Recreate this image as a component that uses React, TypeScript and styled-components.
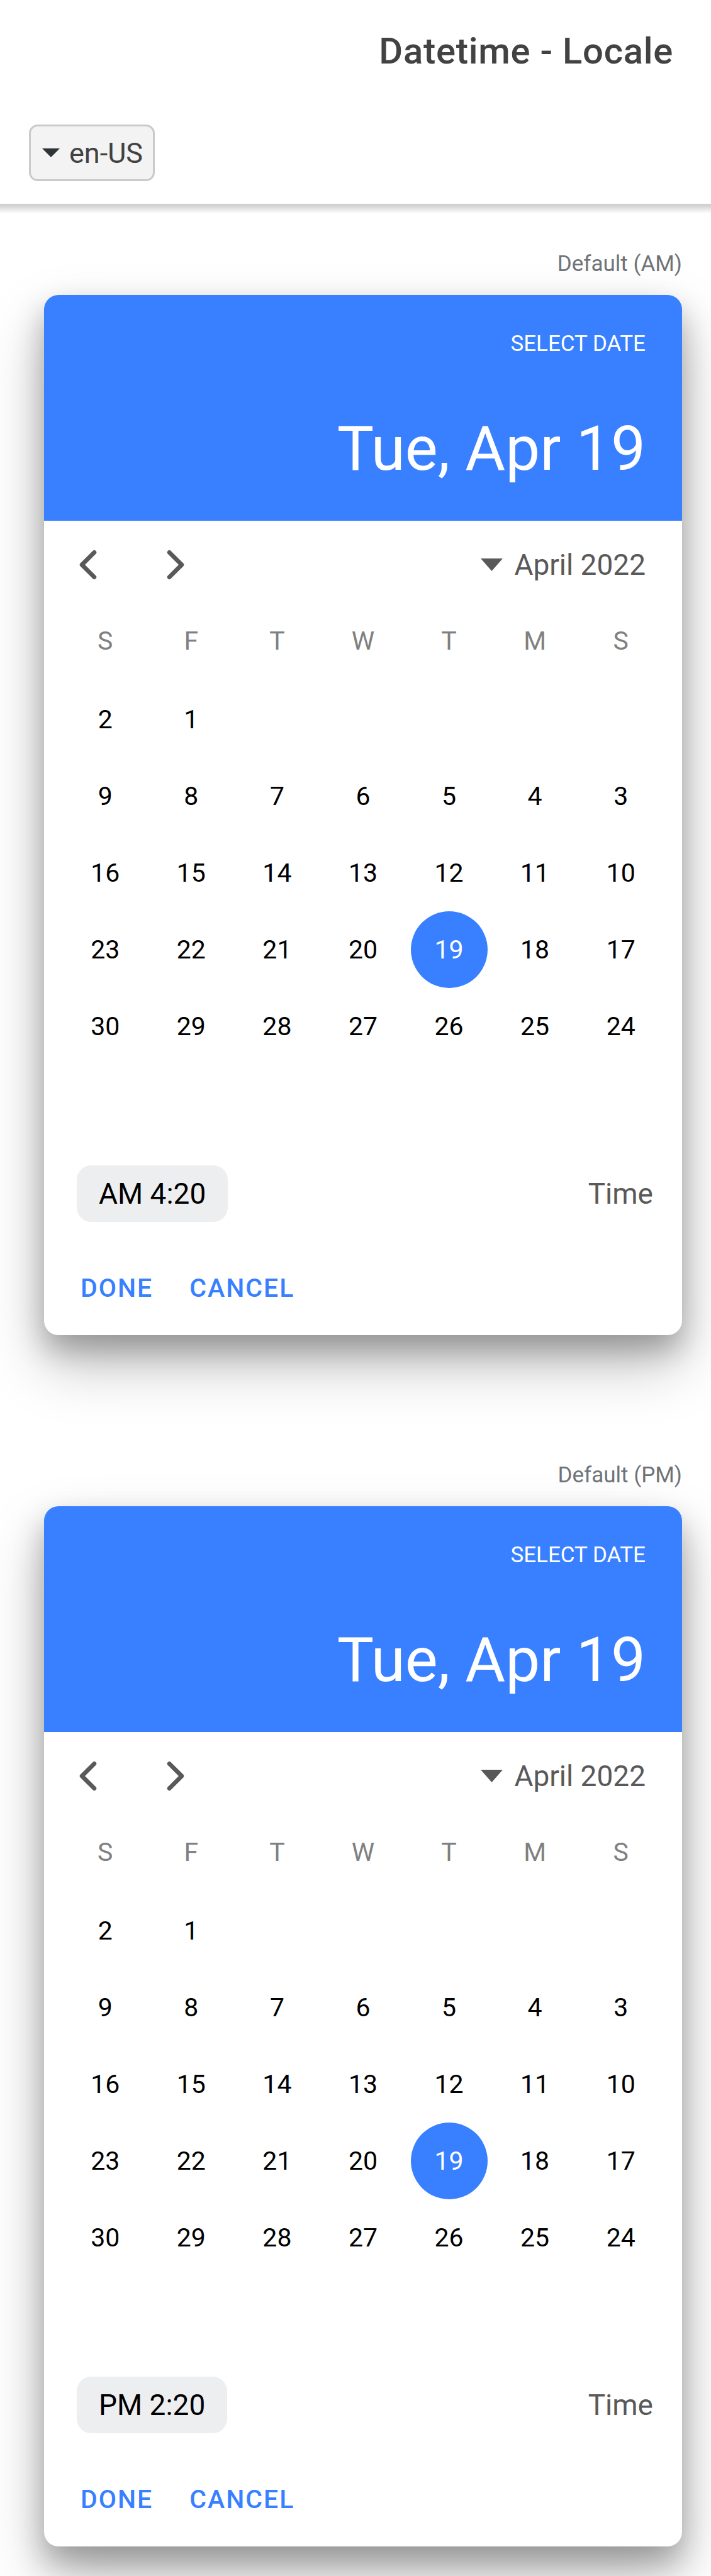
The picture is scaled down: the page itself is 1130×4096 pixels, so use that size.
import React from "react";
import styled, { createGlobalStyle } from "styled-components";

const GlobalStyle = createGlobalStyle`
  *, *::before, *::after { box-sizing: border-box; }
  body {
    margin: 0;
    background: #fff;
    font-family: Roboto, "Liberation Sans", sans-serif;
  }
  button { font-family: inherit; border: 0; margin: 0; padding: 0; background: transparent; cursor: pointer; }
`;

const Header = styled.header`
  position: relative;
  &::after {
    content: "";
    position: absolute;
    top: 100%;
    left: 0;
    right: 0;
    height: 15px;
    background: linear-gradient(#cfcfcf, #d2d2d2 20%, #e6e6e6 55%, #f6f6f6 85%, #fafafa);
  }
`;

const Toolbar = styled.div`
  height: 162px;
  display: flex;
  align-items: center;
  padding: 0 60px 0 46px;
`;

const Title = styled.h1`
  margin: 0 0 0 auto;
  font-size: 58px;
  line-height: 70px;
  font-weight: 500;
  letter-spacing: 0.0125em;
  color: #424242;
`;

const LocaleField = styled.label`
  display: grid;
  align-items: center;
  & > * { grid-area: 1 / 1; }
`;

const LocaleSelect = styled.select`
  appearance: none;
  height: 90px;
  border: 3px solid #cacaca;
  border-radius: 14px;
  padding: 0 15px 0 61px;
  margin: 0;
  background: #f3f3f3;
  color: #424242;
  font: 400 45px Roboto, sans-serif;
`;

const SelectArrow = styled.svg`
  width: 28px;
  height: 14px;
  margin-left: 21px;
  pointer-events: none;
`;

const Content = styled.main`
  padding: 69px 46px 47px 70px;
`;

const Example = styled.section`
  margin-bottom: 196px;
  &:last-child { margin-bottom: 0; }
`;

const ExampleTitle = styled.h2`
  margin: 0 0 23px;
  text-align: right;
  font-size: 35px;
  line-height: 53px;
  font-weight: 400;
  color: #6f7378;
`;

const Card = styled.div`
  border-radius: 23px;
  background: #fff;
  overflow: hidden;
  box-shadow: 0 46px 93px rgba(0, 0, 0, 0.25), 0 23px 46px rgba(0, 0, 0, 0.25);
`;

const CardHeader = styled.div`
  height: 359px;
  padding: 58px 58px 0;
  background: #3880ff;
  color: #fff;
  text-align: right;
`;

const Caption = styled.div`
  font-size: 35px;
  line-height: 40px;
  text-transform: uppercase;
`;

const SelectedDate = styled.div`
  margin-top: 89px;
  font-size: 98px;
  line-height: 116px;
`;

const MonthBar = styled.div`
  display: flex;
  justify-content: space-between;
  align-items: center;
  height: 139px;
  padding: 0 58px 0 0;
  color: #595959;
`;

const Arrows = styled.div`
  display: flex;
`;

const ArrowButton = styled.button`
  width: 139px;
  height: 139px;
  display: flex;
  align-items: center;
  justify-content: center;
  color: inherit;
  svg { width: 70px; height: 70px; }
`;

const MonthButton = styled.button`
  display: flex;
  align-items: center;
  gap: 18px;
  font-size: 46px;
  line-height: 54px;
  color: inherit;
  svg { width: 35px; height: 20px; }
`;

const Calendar = styled.table`
  width: calc(100% - 58px);
  margin: 0 29px;
  table-layout: fixed;
  border-collapse: collapse;
`;

const Weekday = styled.th`
  height: 116px;
  padding: 0 0 12px;
  font-size: 41px;
  font-weight: 400;
  color: #808080;
`;

const DayCell = styled.td`
  height: 122px;
  padding: 0;
  text-align: center;
`;

const Day = styled.button<{ $selected: boolean }>`
  width: 122px;
  height: 122px;
  border-radius: 50%;
  font-size: 41px;
  background: ${(p) => (p.$selected ? "#3880ff" : "transparent")};
  color: ${(p) => (p.$selected ? "#fff" : "#000")};
`;

const TimeRow = styled.div`
  display: flex;
  justify-content: space-between;
  align-items: center;
  padding: 160px 46px 0 52px;
  font-size: 46px;
  color: #595959;
`;

const TimeButton = styled.button`
  height: 90px;
  padding: 0 35px;
  border-radius: 23px;
  background: #edeef0;
  font-size: 46px;
  color: #000;
`;

const Actions = styled.div`
  display: flex;
  gap: 58px;
  padding: 58px 58px 29px;
`;

const ActionButton = styled.button`
  height: 93px;
  font-size: 41px;
  font-weight: 500;
  letter-spacing: 2px;
  text-transform: uppercase;
  color: #3880ff;
`;

const WEEKDAYS = ["S", "F", "T", "W", "T", "M", "S"];

const WEEKS: (number | null)[][] = [
  [2, 1, null, null, null, null, null],
  [9, 8, 7, 6, 5, 4, 3],
  [16, 15, 14, 13, 12, 11, 10],
  [23, 22, 21, 20, 19, 18, 17],
  [30, 29, 28, 27, 26, 25, 24],
];

function Chevron({ points }: { points: string }) {
  return (
    <svg viewBox="0 0 512 512" aria-hidden="true">
      <polyline points={points} fill="none" stroke="currentColor" strokeWidth="50" strokeLinecap="round" strokeLinejoin="round" />
    </svg>
  );
}

function Datetime({ title, time }: { title: string; time: string }) {
  return (
    <Example>
      <ExampleTitle>{title}</ExampleTitle>
      <Card>
        <CardHeader>
          <Caption>Select Date</Caption>
          <SelectedDate>Tue, Apr 19</SelectedDate>
        </CardHeader>
        <MonthBar>
          <Arrows>
            <ArrowButton type="button" aria-label="Next month">
              <Chevron points="328 112 184 256 328 400" />
            </ArrowButton>
            <ArrowButton type="button" aria-label="Previous month">
              <Chevron points="184 112 328 256 184 400" />
            </ArrowButton>
          </Arrows>
          <MonthButton type="button">
            <svg viewBox="0 0 35 20" aria-hidden="true">
              <path d="M0 0H35L17.5 20Z" fill="currentColor" />
            </svg>
            April 2022
          </MonthButton>
        </MonthBar>
        <Calendar>
          <thead>
            <tr>
              {WEEKDAYS.map((name, i) => (
                <Weekday key={i} scope="col">{name}</Weekday>
              ))}
            </tr>
          </thead>
          <tbody>
            {WEEKS.map((week, i) => (
              <tr key={i}>
                {week.map((day, j) => (
                  <DayCell key={j}>
                    {day !== null && <Day type="button" $selected={day === 19}>{day}</Day>}
                  </DayCell>
                ))}
              </tr>
            ))}
          </tbody>
        </Calendar>
        <TimeRow>
          <TimeButton type="button">{time}</TimeButton>
          <span>Time</span>
        </TimeRow>
        <Actions>
          <ActionButton type="button">Done</ActionButton>
          <ActionButton type="button">Cancel</ActionButton>
        </Actions>
      </Card>
    </Example>
  );
}

export default function App() {
  return (
    <>
      <GlobalStyle />
      <Header>
        <Toolbar>
          <Title>Datetime - Locale</Title>
        </Toolbar>
        <Toolbar>
          <LocaleField>
            <LocaleSelect aria-label="Locale" defaultValue="en-US">
              <option value="en-US">en-US</option>
            </LocaleSelect>
            <SelectArrow viewBox="0 0 28 14" aria-hidden="true">
              <path d="M0 0H28L14 14Z" fill="#2e3436" />
            </SelectArrow>
          </LocaleField>
        </Toolbar>
      </Header>
      <Content>
        <Datetime title="Default (AM)" time="AM 4:20" />
        <Datetime title="Default (PM)" time="PM 2:20" />
      </Content>
    </>
  );
}
